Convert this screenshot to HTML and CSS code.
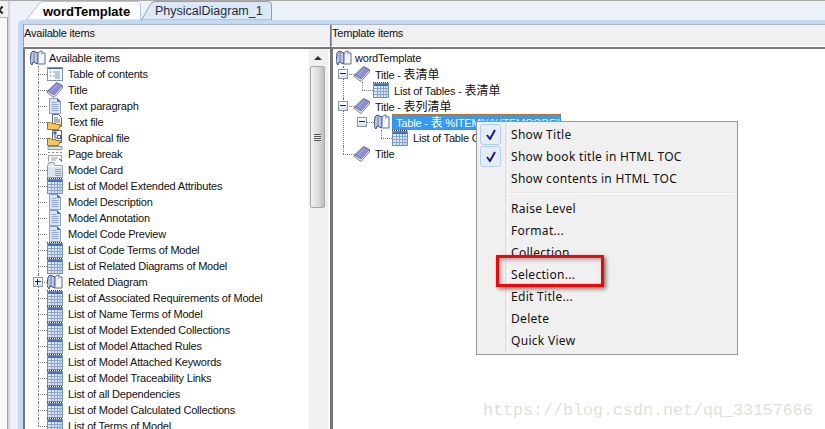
FILE: index.html
```html
<!DOCTYPE html>
<html lang="en">
<head>
<meta charset="utf-8">
<title>wordTemplate</title>
<link rel="stylesheet" href="styles.css">
</head>
<body>
<svg class="defs" width="0" height="0" aria-hidden="true">
  <symbol id="i-book" viewBox="0 0 16 16">
    <path d="M1 3 3 1 8 3v11L3 12 2 15 0 12Z" fill="#b9c6e4" stroke="#3f4f84"/>
    <path d="M8 3c1-1.500 3-2 4-2v10c-1 0-3 1-4 3Z" fill="#e9eefa" stroke="#5a6a9c"/>
    <path d="M12 3h3v11H8" fill="#f4f6fc" stroke="#5a6a9c"/>
    <path d="M4 2v10" stroke="#6d7ba8" fill="none"/>
  </symbol>
  <symbol id="i-title" viewBox="0 0 16 16">
    <path d="M0.500 9 9.500 0.500 15.500 3.500 7 13Z" fill="#8a8fd6" stroke="#6d70a8"/>
    <path d="M0.500 9V11L7 15.500 15.500 6V3.500L7 13Z" fill="#e8e8f4" stroke="#7d7da0"/>
    <path d="M4 9l6-6" stroke="#a9adea" fill="none"/>
  </symbol>
  <symbol id="i-toc" viewBox="0 0 16 16">
    <rect x="0.500" y="1.500" width="15" height="13" fill="#f6f8fd" stroke="#7f94c4"/>
    <path d="M1 2.500h14" stroke="#3a64b8"/>
    <path d="M6 6h7M8 8h5M6 10h7M8 12h5" stroke="#7f94c4"/>
    <path d="M3 6h1M3 10h1" stroke="#3a64b8"/>
  </symbol>
  <symbol id="i-doc" viewBox="0 0 16 16">
    <path d="M2.500 0.500h8l3 3v12h-11Z" fill="#dbe5f9" stroke="#8a9fd4"/>
    <path d="M10.500 0.500v3h3" fill="#3d7ae0" stroke="#3d7ae0"/>
    <path d="M4.500 4.500h5M4.500 6.500h7M4.500 8.500h7M4.500 10.500h7M4.500 12.500h7" stroke="#93a8dc"/>
  </symbol>
  <symbol id="i-file" viewBox="0 0 16 16">
    <path d="M5.500 0.500h6l3 3v9h-9Z" fill="#f6f6f6" stroke="#5f6678"/>
    <path d="M7 4h4M7 6h6M7 8h6" stroke="#6d7488"/>
    <path d="M0.500 8.500h3l1 1h4v1h5l-2 5h-11Z" fill="#f7c858" stroke="#a07818"/>
  </symbol>
  <symbol id="i-graphic" viewBox="0 0 16 16">
    <path d="M5.500 0.500h9v12h-9Z" fill="#f6f6f6" stroke="#5f6678"/>
    <rect x="6.500" y="1.500" width="3" height="3" fill="#3a5ed0"/>
    <rect x="10.500" y="5.500" width="3" height="3" fill="#fff" stroke="#3a5ed0"/>
    <path d="M8 5v3h2" stroke="#3a5ed0" fill="none"/>
    <path d="M0.500 8.500h3l1 1h4v1h5l-2 5h-11Z" fill="#f7c858" stroke="#a07818"/>
  </symbol>
  <symbol id="i-break" viewBox="0 0 16 16">
    <path d="M1 0.500h14v3h-14Z" fill="#d9e1f0" stroke="#8b94a8"/>
    <path d="M1 6.500h2M5 6.500h2M9 6.500h2M13 6.500h2" stroke="#7f8898"/>
    <path d="M1.500 9.500h13M1.500 9.500v6M14.500 9.500v6" stroke="#9aa2b4" fill="none"/>
    <path d="M4 12h7M4 14h5" stroke="#8b94a8"/>
    <path d="M12 13l3 2" stroke="#30384c"/>
  </symbol>
  <symbol id="i-card" viewBox="0 0 16 16">
    <path d="M0.500 3.500 2 0.500h5l1 3h7.500v12H0.500Z" fill="#dbe5f5" stroke="#8a9cc0"/>
    <path d="M1 4.500h14" stroke="#fff"/>
    <path d="M8 7.500h6M8 9.500h6M8 11.500h6M8 13.500h6" stroke="#8a9cc0"/>
  </symbol>
  <symbol id="i-table" viewBox="0 0 16 16">
    <rect x="0.500" y="1.500" width="15" height="14" fill="#dfe8f8" stroke="#6f8fc4"/>
    <path d="M0 0.500h16" stroke="#333" stroke-dasharray="1 1"/>
    <rect x="1" y="2" width="14" height="2" fill="#3f6fc0"/>
    <path d="M4.500 4v11M7.500 4v11M10.500 4v11M13 4v11M1 6.500h14M1 9.500h14M1 12.500h14" stroke="#86a3d4"/>
  </symbol>
</svg>

<div class="app">
  <aside class="rail">
    <div class="rail-head"><span class="rail-arrow"></span></div>
    <div class="rail-body"></div>
  </aside>

  <main class="workspace">
    <nav class="tabs">
      <div class="tab tab-active">
        <svg class="tab-shape" viewBox="0 0 115 19" preserveAspectRatio="none"><path d="M0.500 19 13 2.500Q15 .5 18 .5H111Q114.500 .5 114.500 4V19Z" fill="#fbfcfe" stroke="#b4c4dc"/></svg>
        <span class="tab-label">wordTemplate</span>
      </div>
      <div class="tab tab-idle">
        <svg class="tab-shape" viewBox="0 0 131 19" preserveAspectRatio="none"><path d="M0.500 19 10 2.500Q12 .5 15 .5H127Q130.500 .5 130.500 4V19Z" fill="#dde8f7" stroke="#8fa0b8"/></svg>
        <span class="tab-label">PhysicalDiagram_1</span>
      </div>
    </nav>

    <div class="frame">
      <div class="panes">
        <section class="pane pane-left">
          <header class="pane-head">Available items</header>
          <div class="tree-box">
            <div class="tree tree-left">
              <div class="row root"><svg class="ico"><use href="#i-book"/></svg><span>Available items</span></div>
              <ul class="branch">
                <li><div class="row"><i class="conn"></i><svg class="ico"><use href="#i-toc"/></svg><span>Table of contents</span></div></li>
                <li><div class="row"><i class="conn"></i><svg class="ico"><use href="#i-title"/></svg><span>Title</span></div></li>
                <li><div class="row"><i class="conn"></i><svg class="ico"><use href="#i-doc"/></svg><span>Text paragraph</span></div></li>
                <li><div class="row"><i class="conn"></i><svg class="ico"><use href="#i-file"/></svg><span>Text file</span></div></li>
                <li><div class="row"><i class="conn"></i><svg class="ico"><use href="#i-graphic"/></svg><span>Graphical file</span></div></li>
                <li><div class="row"><i class="conn"></i><svg class="ico"><use href="#i-break"/></svg><span>Page break</span></div></li>
                <li><div class="row"><i class="conn"></i><svg class="ico"><use href="#i-card"/></svg><span>Model Card</span></div></li>
                <li><div class="row"><i class="conn"></i><svg class="ico"><use href="#i-table"/></svg><span>List of Model Extended Attributes</span></div></li>
                <li><div class="row"><i class="conn"></i><svg class="ico"><use href="#i-doc"/></svg><span>Model Description</span></div></li>
                <li><div class="row"><i class="conn"></i><svg class="ico"><use href="#i-doc"/></svg><span>Model Annotation</span></div></li>
                <li><div class="row"><i class="conn"></i><svg class="ico"><use href="#i-doc"/></svg><span>Model Code Preview</span></div></li>
                <li><div class="row"><i class="conn"></i><svg class="ico"><use href="#i-table"/></svg><span>List of Code Terms of Model</span></div></li>
                <li><div class="row"><i class="conn"></i><svg class="ico"><use href="#i-table"/></svg><span>List of Related Diagrams of Model</span></div></li>
                <li><div class="row"><i class="exp plus"></i><i class="conn"></i><svg class="ico"><use href="#i-book"/></svg><span>Related Diagram</span></div></li>
                <li><div class="row"><i class="conn"></i><svg class="ico"><use href="#i-table"/></svg><span>List of Associated Requirements of Model</span></div></li>
                <li><div class="row"><i class="conn"></i><svg class="ico"><use href="#i-table"/></svg><span>List of Name Terms of Model</span></div></li>
                <li><div class="row"><i class="conn"></i><svg class="ico"><use href="#i-table"/></svg><span>List of Model Extended Collections</span></div></li>
                <li><div class="row"><i class="conn"></i><svg class="ico"><use href="#i-table"/></svg><span>List of Model Attached Rules</span></div></li>
                <li><div class="row"><i class="conn"></i><svg class="ico"><use href="#i-table"/></svg><span>List of Model Attached Keywords</span></div></li>
                <li><div class="row"><i class="conn"></i><svg class="ico"><use href="#i-table"/></svg><span>List of Model Traceability Links</span></div></li>
                <li><div class="row"><i class="conn"></i><svg class="ico"><use href="#i-table"/></svg><span>List of all Dependencies</span></div></li>
                <li><div class="row"><i class="conn"></i><svg class="ico"><use href="#i-table"/></svg><span>List of Model Calculated Collections</span></div></li>
                <li><div class="row"><i class="conn"></i><svg class="ico"><use href="#i-table"/></svg><span>List of Terms of Model</span></div></li>
              </ul>
            </div>
            <div class="scrollbar">
              <div class="sb-btn"><span class="sb-up"></span></div>
              <div class="sb-thumb"><span class="sb-grip"></span></div>
            </div>
          </div>
        </section>

        <section class="pane pane-right">
          <header class="pane-head">Template items</header>
          <div class="tree-box">
            <div class="tree tree-right">
              <div class="row root"><svg class="ico"><use href="#i-book"/></svg><span>wordTemplate</span></div>
              <ul class="branch">
                <li>
                  <div class="row"><i class="exp"></i><i class="conn"></i><svg class="ico"><use href="#i-title"/></svg><span>Title - <b class="cjk">表清单</b></span></div>
                  <ul class="branch sub">
                    <li><div class="row"><i class="conn"></i><svg class="ico"><use href="#i-table"/></svg><span>List of Tables - <b class="cjk">表清单</b></span></div></li>
                  </ul>
                </li>
                <li>
                  <div class="row"><i class="exp"></i><i class="conn"></i><svg class="ico"><use href="#i-title"/></svg><span>Title - <b class="cjk">表列清单</b></span></div>
                  <ul class="branch sub">
                    <li class="no-line">
                      <div class="row"><i class="exp"></i><i class="conn"></i><svg class="ico"><use href="#i-book"/></svg><span class="selected">Table - <b class="cjk">表</b> %ITEM%%ITEMCODE%</span></div>
                      <ul class="branch sub3">
                        <li><div class="row"><i class="conn"></i><svg class="ico"><use href="#i-table"/></svg><span>List of Table Columns</span></div></li>
                      </ul>
                    </li>
                  </ul>
                </li>
                <li><div class="row"><i class="conn"></i><svg class="ico"><use href="#i-title"/></svg><span>Title</span></div></li>
              </ul>
            </div>
          </div>
        </section>
      </div>
    </div>
  </main>
</div>

<div class="menu">
  <div class="menu-item"><span class="check"><svg class="tick" viewBox="0 0 10 11"><path d="M1 6l3 4 5-9" fill="none" stroke="#1a1a8c" stroke-width="2"/></svg></span><span>Show Title</span></div>
  <div class="menu-item"><span class="check"><svg class="tick" viewBox="0 0 10 11"><path d="M1 6l3 4 5-9" fill="none" stroke="#1a1a8c" stroke-width="2"/></svg></span><span>Show book title in HTML TOC</span></div>
  <div class="menu-item"><span class="nocheck"></span><span>Show contents in HTML TOC</span></div>
  <div class="menu-sep"></div>
  <div class="menu-item"><span class="nocheck"></span><span>Raise Level</span></div>
  <div class="menu-item"><span class="nocheck"></span><span>Format...</span></div>
  <div class="menu-item"><span class="nocheck"></span><span>Collection</span></div>
  <div class="menu-item"><span class="nocheck"></span><span>Selection...</span></div>
  <div class="menu-item"><span class="nocheck"></span><span>Edit Title...</span></div>
  <div class="menu-item"><span class="nocheck"></span><span>Delete</span></div>
  <div class="menu-item"><span class="nocheck"></span><span>Quick View</span></div>
</div>
<div class="callout"></div>
<div class="watermark">https://blog.csdn.net/qq_33157666</div>
</body>
</html>
```

FILE: styles.css
```css
* { box-sizing: border-box; }
html, body { margin: 0; padding: 0; height: 100%; overflow: hidden; background: #fff; }
body {
  position: relative;
  font-family: "Liberation Sans", "Noto Sans CJK SC", sans-serif;
  font-size: 11px;
  letter-spacing: -.2px;
  color: #111;
}
.defs { position: absolute; }
ul { list-style: none; margin: 0; padding: 0; }
i { display: block; }
.cjk { font-weight: 400; font-size: 12px; letter-spacing: 0; font-family: "Noto Sans CJK SC", sans-serif; }

.app {
  display: flex;
  height: 429px;
  border-top: 1px solid #a9a9a9;
}

/* left rail */
.rail { width: 10px; flex: none; display: flex; flex-direction: column; background: #d4d4d4; }
.rail-head { height: 17px; background: #f0f0f0; width: 8px; position: relative; border-bottom: 1px solid #bbb; }
.rail-arrow {
  position: absolute; left: -1px; top: 6px; width: 6px; height: 6px;
  border-left: 2px solid #222; border-bottom: 2px solid #222;
  transform: rotate(45deg);
}
.rail-body { flex: 1; width: 8px; background: #fafafa; border-right: 1px solid #a0a0a0; }

/* workspace */
.workspace { flex: 1; min-width: 0; display: flex; flex-direction: column; background: #edf1f8; }
.tabs { height: 19px; flex: none; display: flex; padding-left: 16px; align-items: flex-end; }
.tab { position: relative; height: 19px; display: flex; align-items: center; padding-top: 1px; }
.tab-shape { position: absolute; left: 0; top: 0; width: 100%; height: 100%; }
.tab-label { position: relative; letter-spacing: 0; font-family: "Liberation Sans", sans-serif; }
.tab-active { width: 115px; padding-left: 17px; z-index: 1; }
.tab-active .tab-label { font-size: 13px; font-weight: 700; color: #000; }
.tab-idle { width: 131px; padding-left: 14px; }
.tab-idle .tab-label { font-size: 12.5px; color: #1c2c3c; }

.frame {
  flex: 1; min-height: 0;
  margin-left: 8px;
  padding: 5px 0 0 5px;
  background: #c6d7f3;
  border-radius: 5px 0 0 0;
}
.panes { display: flex; height: 100%; background: #f0f0f0; box-shadow: 0 -1px 0 #a9b6cc; }
.pane { display: flex; flex-direction: column; min-width: 0; }
.pane-left { width: 308px; flex: none; border-right: 1px solid #777; }
.pane-right { flex: 1; }
.pane-head {
  height: 22px; flex: none;
  padding: 1px 0 0 0;
  line-height: 14px;
  background: #f0f0f0;
  border-left: 1px solid #999;
  border-bottom: 1px solid #fff;
}
.tree-box {
  flex: 1; min-height: 0;
  display: flex;
  background: #fff;
  border-top: 2px solid #777;
  border-left: 2px solid #777;
  overflow: hidden;
}
.tree { flex: 1; min-width: 0; padding-top: 1px; }
.tree-left { padding-left: 5px; }
.tree-right { padding-left: 3px; }

.row { position: relative; display: flex; align-items: center; height: 16px; white-space: nowrap; }
.row > span { margin-left: 5px; line-height: 16px; }
.root > span { margin-left: 3px; }
.ico { width: 16px; height: 16px; flex: none; display: block; }

.branch > li { position: relative; }
.branch > li::before {
  content: ""; position: absolute; left: 0; top: 0; bottom: 0;
  border-left: 1px dotted #777;
}
.branch > li:last-child::before { bottom: auto; height: 8px; }
.branch > .no-line::before { display: none; }
.conn { flex: none; width: 11px; height: 1px; border-bottom: 1px dotted #777; }

.tree-left .branch { margin-left: 8px; }
.tree-left .conn { width: 9px; }
.tree-right .branch { margin-left: 7px; }
.tree-right .sub { margin-left: 19px; }
.tree-right .sub3 { margin-left: 19px; }
.no-line > .row .conn { width: 12px; }

.exp {
  position: absolute; left: -5px; top: 3px; width: 10px; height: 10px;
  background: linear-gradient(#fff, #d9dfe8);
  border: 1px solid #8796a8;
  z-index: 1;
}
.exp::before { content: ""; position: absolute; left: 1px; top: 3px; width: 6px; height: 2px; border-top: 1px solid #222; }
.plus::after { content: ""; position: absolute; left: 3px; top: 1px; width: 1px; height: 6px; background: #222; }

.row > .selected {
  display: block;
  height: 16px;
  width: 169px;
  margin-left: 2px;
  padding-left: 3px;
  line-height: 14px;
  color: #fff;
  background: #3399ff;
  border: 1px dotted #c86a10;
  white-space: nowrap;
  overflow: hidden;
}

/* scrollbar */
.scrollbar { width: 20px; margin-right: 2px; flex: none; background: #f0f0f0; border-left: 1px solid #f8f8f8; padding: 0 3px 0 1px; }
.sb-btn { height: 17px; display: flex; align-items: center; justify-content: center; }
.sb-up { width: 0; height: 0; border: 4px solid transparent; border-top: 0; border-bottom: 4px solid #333; }
.sb-thumb {
  height: 142px;
  display: flex; align-items: center; justify-content: center;
  background: linear-gradient(90deg, #f2f2f2, #dcdcdc 55%, #bdbdbd);
  border: 1px solid #a8a8a8;
  border-radius: 2px;
}
.sb-grip { width: 7px; height: 7px; background: repeating-linear-gradient(#555 0 1px, #e8e8e8 1px 2px); }

/* context menu */
.menu {
  position: absolute; left: 476px; top: 121px; width: 262px; height: 234px;
  padding: 1px 2px;
  background: #f0f0f0;
  border: 1px solid #979797;
  font-family: "Noto Sans", sans-serif;
  font-size: 12px;
  letter-spacing: .3px;
  color: #111;
}
.menu::before { content: ""; position: absolute; left: 28px; top: 2px; bottom: 2px; width: 2px; background: #e2e3e3; border-right: 1px solid #fff; }
.menu-item { display: flex; align-items: center; height: 22px; white-space: nowrap; position: relative; }
.check {
  width: 21px; height: 21px; margin: 0 10px 0 1px; flex: none;
  display: flex; align-items: center; justify-content: center;
  background: #e6edf9;
  border: 1px solid #aecff7;
  border-radius: 3px;
}
.tick { width: 10px; height: 11px; display: block; }
.nocheck { width: 21px; margin: 0 10px 0 1px; flex: none; }
.menu-sep { height: 5px; margin: 3px 0 0 30px; border-top: 1px solid #e2e3e3; box-shadow: inset 0 1px 0 #fff; }

.callout {
  position: absolute; left: 496px; top: 255px; width: 108px; height: 32px;
  border: 3px solid #f00;
  box-shadow: 2px 2px 4px rgba(0, 0, 0, .5), inset 2px 2px 4px rgba(0, 0, 0, .3);
}

.watermark {
  position: absolute; left: 483px; top: 401px;
  font-family: "Liberation Mono", monospace;
  font-size: 16.67px;
  letter-spacing: 0;
  line-height: 20px;
  color: #dfdfdb;
  white-space: nowrap;
}
```
